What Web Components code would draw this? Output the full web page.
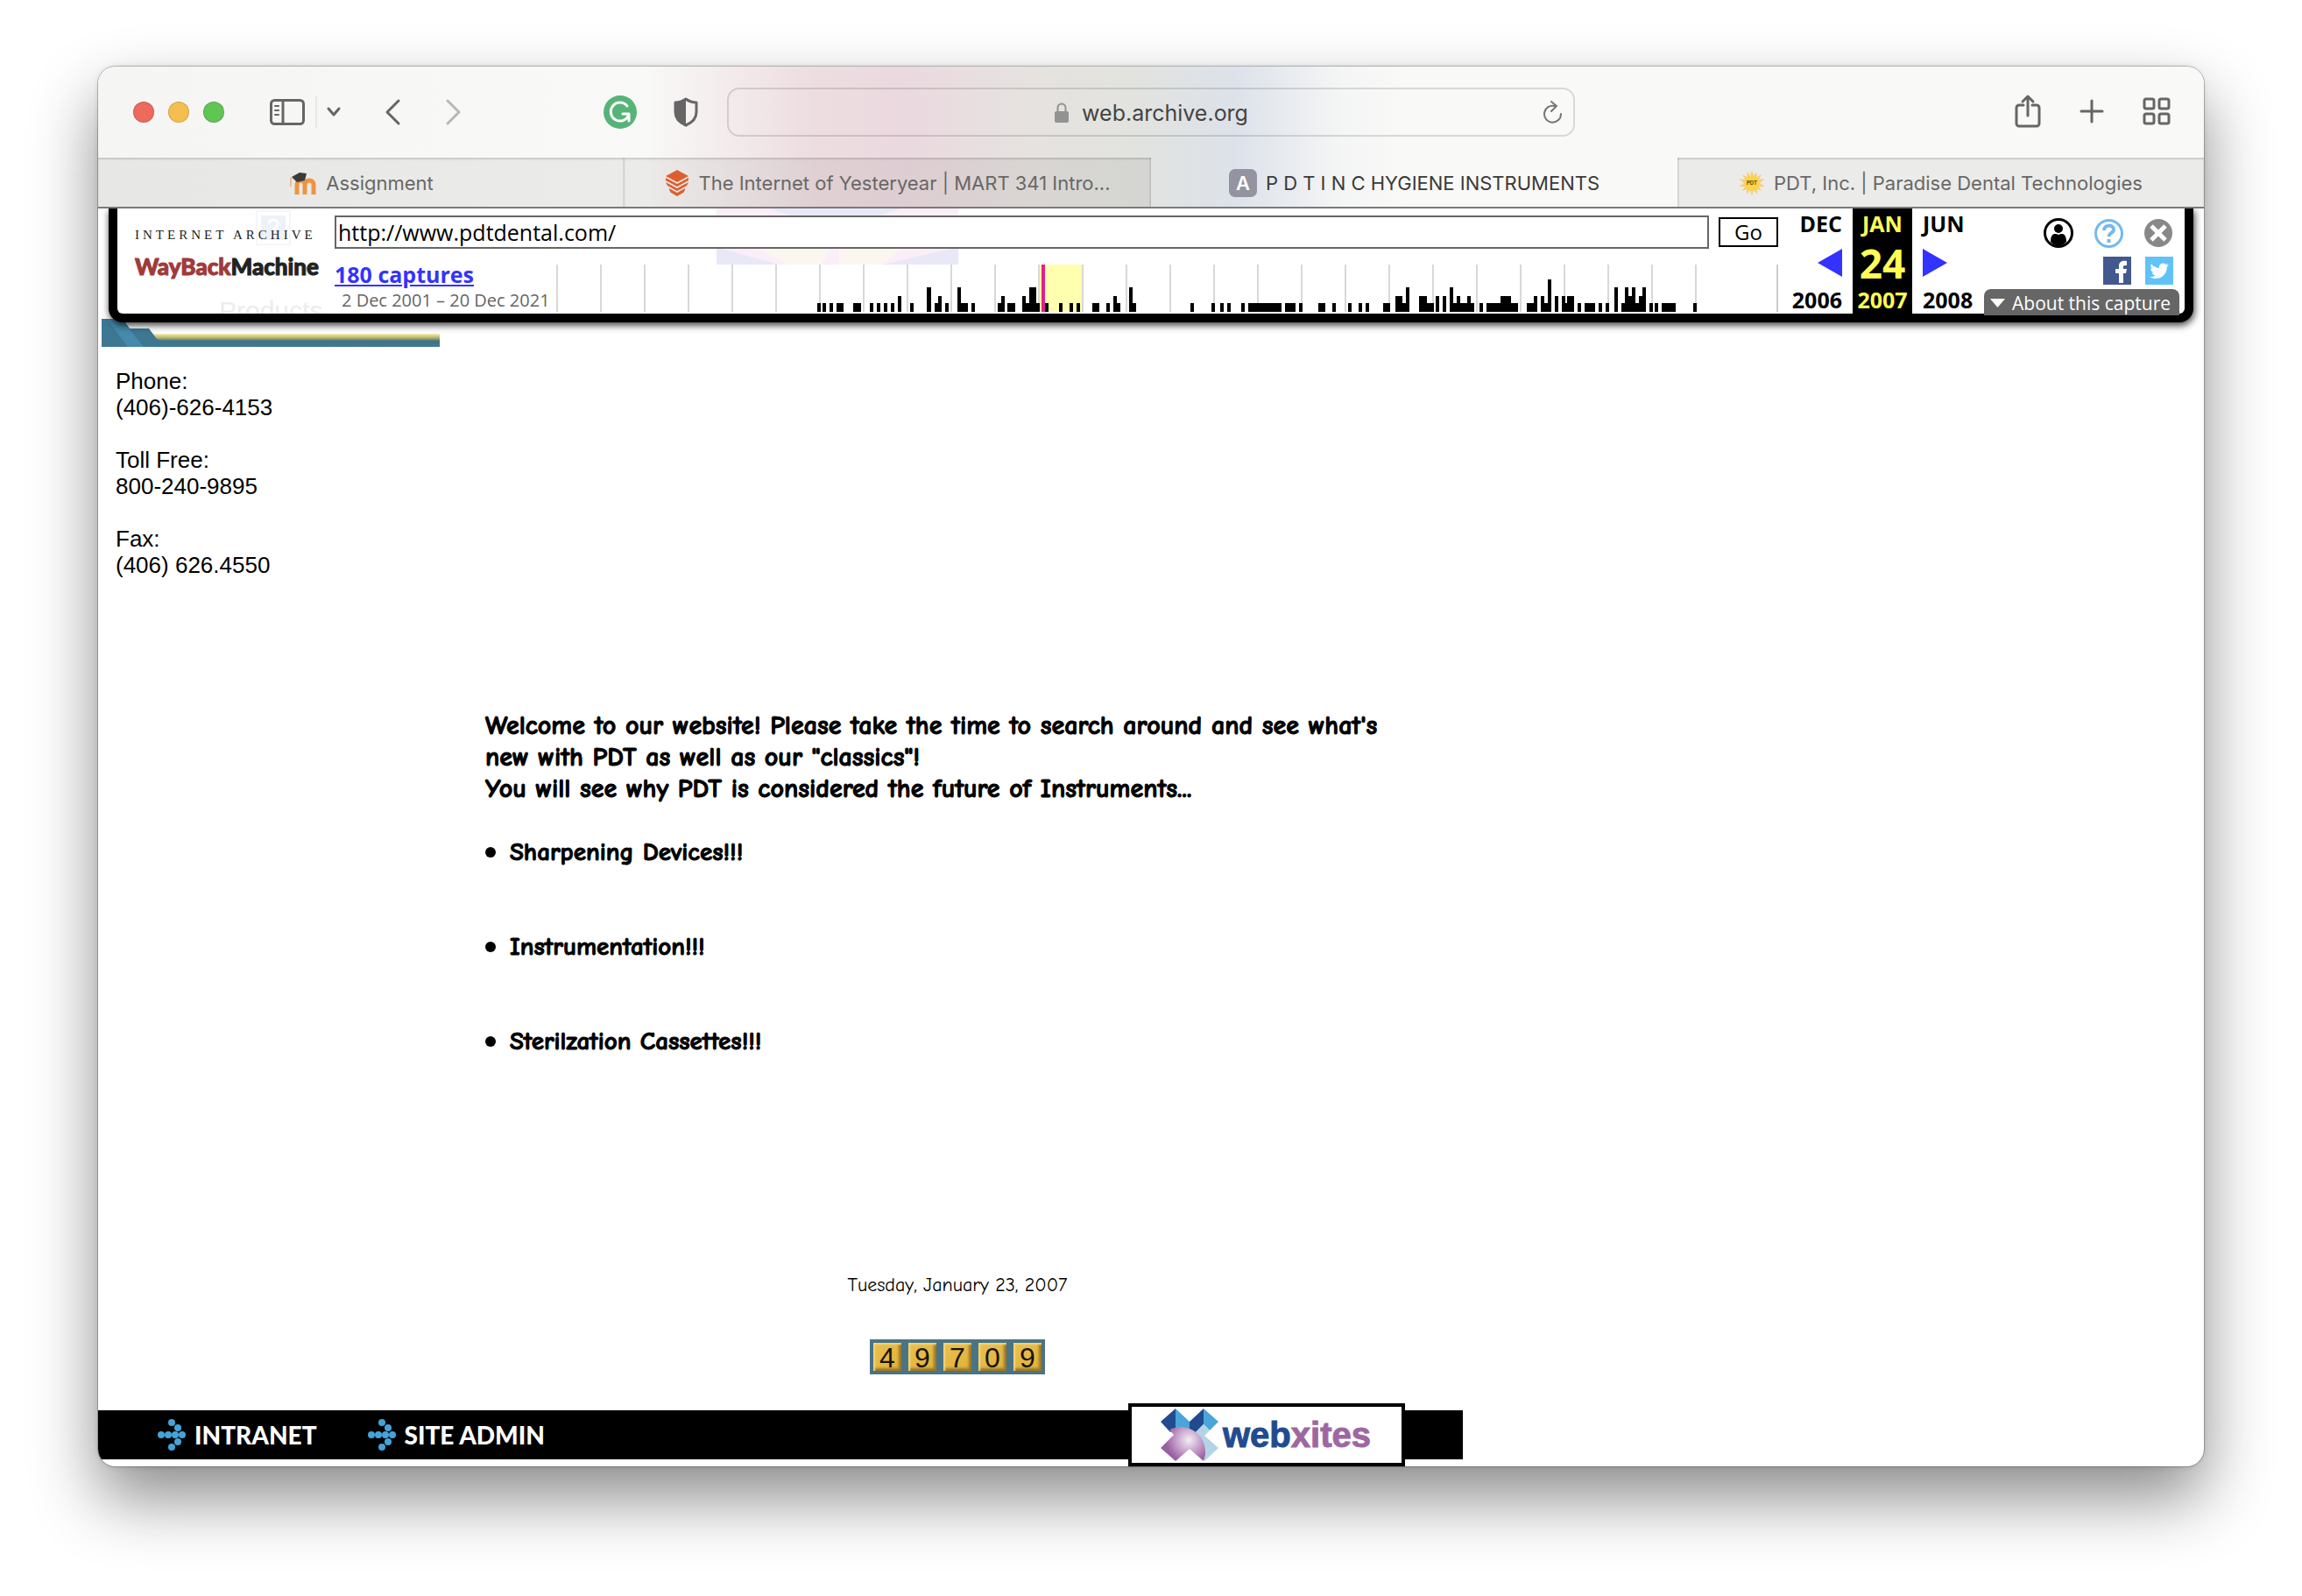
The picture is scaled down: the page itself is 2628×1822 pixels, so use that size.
<!DOCTYPE html>
<html lang="en">
<head>
<meta charset="utf-8">
<title>P D T I N C HYGIENE INSTRUMENTS</title>
<style>
  html { background: #fff; }
  body { margin: 0; min-height: 100vh; box-sizing: border-box; padding: 76px 112px 148px; display: flex; }
  browser-window { flex: 1; }
</style>
</head>
<body>
<browser-window>
  <browser-toolbar slot="toolbar"></browser-toolbar>
  <tab-strip slot="tabs">
    <browser-tab>
      <svg slot="icon" width="32" height="32" viewBox="0 0 32 32" aria-hidden="true"><path d="M9 29V18c0-3 2-5 4.500-5s4.500 2 4.500 5v11M18 18c0-3 2-5 5-5s5 2 5 5v11" fill="none" stroke="#ee9440" stroke-width="5"/><path d="M3 9l9-5 8 1-2 8-9 2z" fill="#3a3a3a"/><path d="M3 9c-2 4-1 8-1 11" stroke="#e8b9a0" stroke-width="2" fill="none"/></svg>
      Assignment
    </browser-tab>
    <browser-tab>
      <svg slot="icon" width="28" height="32" viewBox="0 0 28 32" aria-hidden="true"><g fill="#de5f2e"><path d="M14 1l13 7-13 7L1 8z"/><path d="M1 10l13 7 13-7v3l-13 7-13-7z"/><path d="M1 15l13 7 13-7-2 4-11 6-11-6z"/><path d="M5 22l9 5 9-5v2l-2 3-7 4-7-4-2-3z"/></g></svg>
      The Internet of Yesteryear | MART 341 Intro...
    </browser-tab>
    <browser-tab active>
      <svg slot="icon" width="32" height="32" viewBox="0 0 32 32" aria-hidden="true"><rect width="32" height="32" rx="7" fill="#9393a1"/><text x="16" y="24" text-anchor="middle" font-family="Inter, sans-serif" font-weight="600" font-size="22" fill="#fff">A</text></svg>
      P D T I N C HYGIENE INSTRUMENTS
    </browser-tab>
    <browser-tab>
      <svg slot="icon" width="30" height="30" viewBox="-15 -15 30 30" aria-hidden="true"><path fill="#f6cf7c" d="M0-15L2-8 5-13 6-7 11-10 8-4 15-5 9 0 15 4 8 4 11 9 6 7 6 13 2 8 0 15-2 8-6 13-6 7-11 9-8 4-15 4-9 0-15-5-8-4-11-10-6-7-5-13-2-8z"/><circle r="8" fill="#fbd63f"/><text y="2" text-anchor="middle" font-family="Inter, sans-serif" font-weight="700" font-size="6" fill="#5a4a10">PDT</text></svg>
      PDT, Inc. | Paradise Dental Technologies
    </browser-tab>
  </tab-strip>
  <wayback-bar></wayback-bar>
  <dental-page></dental-page>
</browser-window>

<script>
const define = (name, html, after) => {
  const template = document.createElement('template');
  template.innerHTML = html;
  customElements.define(name, class extends HTMLElement {
    constructor() {
      super();
      this.attachShadow({ mode: 'open' }).append(template.content.cloneNode(true));
      if (after) after(this.shadowRoot);
    }
  });
};

define('browser-window', `
<style>
  :host { display: flex; flex-direction: column; background: #fff; border-radius: 20px; overflow: hidden;
    box-shadow: 0 0 0 1px rgba(0,0,0,.22), 0 0 6px rgba(0,0,0,.12), 0 36px 76px rgba(0,0,0,.46); font-family: Inter, sans-serif; }
  header { border-bottom: 2px solid #7a7a7a;
    background: linear-gradient(90deg, #f5f5f4 0, #f9f9f7 26%, #eddde0 34%, #ebd9df 38%, #e6e2e0 44%, #e2e3df 49%, #dde2ea 54%, #f4f5f5 59%, #f9f9f7 62%); }
</style>
<header><slot name="toolbar"></slot><slot name="tabs"></slot></header>
<slot></slot>`);

define('browser-toolbar', `
<style>
  :host { display: grid; grid-template-columns: 718px minmax(200px, 968px) 1fr; align-items: center; height: 104px; color: #666; }
  .side { display: flex; align-items: center; }
  button { border: 0; padding: 0; margin: 0; background: none; color: inherit; display: flex; cursor: pointer; }
  svg { display: block; fill: none; stroke: currentColor; stroke-width: 3; stroke-linecap: round; stroke-linejoin: round; overflow: visible; }
  .lights { display: flex; gap: 16px; margin: 0 52px 0 40px; }
  .lights button { width: 24px; height: 24px; border-radius: 50%; box-sizing: border-box; border: 1px solid rgba(0,0,0,.14); }
  .split { width: 2px; height: 36px; background: #e8e8e7; margin: 0 12px; }
  .back { margin-left: 52px; } .fwd { margin-left: 54px; color: #b8b8b8; }
  .gram { margin-left: auto; } .shield { margin: 0 33px 0 42px; }
  .address { height: 56px; box-sizing: border-box; border: 2px solid rgba(0,0,0,.13); border-radius: 14px; display: grid;
    grid-template-columns: 34px 1fr 34px; align-items: center; }
  .url { grid-column: 2; display: flex; justify-content: center; align-items: center; gap: 14px; padding-top: 2px; }
  input { field-sizing: content; border: 0; padding: 0; background: none; font: 25px/32px Inter, sans-serif; color: #444; outline: 0; }
  .right { justify-content: flex-end; gap: 44px; padding: 0 38px 2px 0; }
</style>
<div class="side">
  <div class="lights"><button aria-label="Close window" style="background:#ed6a5e"></button><button aria-label="Minimise" style="background:#f5bf4f"></button><button aria-label="Zoom" style="background:#61c554"></button></div>
  <button aria-label="Sidebar"><svg width="40" height="30" viewBox="0 0 40 30"><rect x="1.500" y="1.500" width="37" height="27" rx="4"/><path d="M15 2v26"/><path d="M6 8h4M6 13h4M6 18h4" stroke-width="2"/></svg></button>
  <span class="split"></span>
  <button aria-label="Tab groups"><svg width="14" height="8" viewBox="0 0 14 8"><path d="M1 0l6 7 6-7"/></svg></button>
  <button class="back" aria-label="Back"><svg width="16" height="28" viewBox="0 0 16 28"><path d="M15 1L2 14l13 13"/></svg></button>
  <button class="fwd" aria-label="Forward"><svg width="16" height="28" viewBox="0 0 16 28"><path d="M1 1l13 13L1 27"/></svg></button>
  <button class="gram" aria-label="Grammarly"><svg width="38" height="38" viewBox="0 0 38 38"><circle cx="19" cy="19" r="19" fill="#56b476" stroke="none"/><path d="M27 12a10.500 10.500 0 1 0 2 9h-7M29 21v8" stroke="#fff" stroke-width="3"/></svg></button>
  <button class="shield" aria-label="Privacy report"><svg width="28" height="34" viewBox="0 0 28 34"><path d="M14 2c4 3 8 4 12 4v11c0 7-5 12-12 15C7 29 2 24 2 17V6c4 0 8-1 12-4z" stroke-width="3"/><path d="M14 2v30C7 29 2 24 2 17V6c4 0 8-1 12-4z" fill="currentColor" stroke="none"/></svg></button>
</div>
<div class="address">
  <label class="url"><svg width="18" height="24" viewBox="0 0 18 24" style="color:#939391"><rect x="1" y="10" width="16" height="13" rx="2" fill="currentColor" stroke="none"/><path d="M4.500 11V6a4.500 4.500 0 0 1 9 0v5" stroke-width="2"/></svg><input value="web.archive.org" aria-label="Address"></label>
  <button aria-label="Reload"><svg width="22" height="26" viewBox="0 0 22 26" style="color:#777"><path d="M13 6a9.500 9.500 0 1 0 7 9M9 1l6 5-6 6" stroke-width="2"/></svg></button>
</div>
<div class="side right">
  <button aria-label="Share"><svg width="30" height="38" viewBox="0 0 30 38"><path d="M10 12H5a3 3 0 0 0-3 3v18a3 3 0 0 0 3 3h20a3 3 0 0 0 3-3V15a3 3 0 0 0-3-3h-5M15 24V2M9 8l6-6 6 6"/></svg></button>
  <button aria-label="New tab"><svg width="28" height="28" viewBox="0 0 28 28"><path d="M14 2v24M2 14h24"/></svg></button>
  <button aria-label="Tab overview"><svg width="32" height="32" viewBox="0 0 32 32"><rect x="2" y="2" width="11" height="11" rx="2"/><rect x="19" y="2" width="11" height="11" rx="2"/><rect x="2" y="19" width="11" height="11" rx="2"/><rect x="19" y="19" width="11" height="11" rx="2"/></svg></button>
</div>`);

define('tab-strip', `
<style>:host { display: grid; grid-template-columns: repeat(4, 1fr); height: 56px; }</style><slot></slot>`);

define('browser-tab', `
<style>
  :host { display: flex; background: rgba(0,0,0,.055); box-shadow: inset 0 2px 2px rgba(0,0,0,.14), inset -2px 0 rgba(0,0,0,.07); color: #686866; }
  :host([active]) { background: none; box-shadow: none; color: #3a3a3a; }
  :host(:last-child) { box-shadow: inset 0 2px 2px rgba(0,0,0,.14), inset 2px 0 rgba(0,0,0,.07); }
  button { flex: 1; display: flex; align-items: center; justify-content: center; gap: 10px; border: 0; padding: 2px 0 0; background: none;
    font: 22px/28px Inter, sans-serif; color: inherit; white-space: nowrap; }
</style>
<button><slot name="icon"></slot><span><slot></slot></span></button>`);

define('capture-graph', `
<style>:host { display: block; } svg { display: block; }</style>
<svg width="1395" height="54" viewBox="635 302 1395 54" role="img" aria-label="Captures over time" shape-rendering="crispEdges"></svg>`,
root => {
  const bars = [[933],[939],[947],[955,8],[974,9],[993],[1001],[1009],[1017],[1025,4,2],[1039],[1058,5,3],[1067,8],[1071,4,2],[1079],
    [1093,12],[1093,4,3],[1109],[1139,8],[1143,4,2],[1150,9],[1167,20],[1167,4,2],[1175,8,3],[1193],[1209],[1221],[1229],[1247,8],[1263],
    [1271,8],[1271,4,2],[1289,8],[1289,4,3],[1359],[1383],[1393],[1401],[1417],[1425,38],[1467,12],[1483],[1505,8],[1521],[1539],[1551],
    [1559],[1579,8],[1593,16],[1593,8,2],[1605,4,3],[1620,17],[1620,9,2],[1639,4,2],[1647,4,2],[1655,28],[1655,4,3],[1663,4,2],[1675,4,2],
    [1689],[1697,36],[1713,12,2],[1743,12],[1751,4,2],[1759,12],[1759,4,2],[1767,4,4],[1775,4,2],[1783,14],[1783,4,2],[1789,8,2],[1801],
    [1809,12],[1825],[1833],[1843,4,3],[1851,28],[1855,4,3],[1859,4,2],[1863,4,3],[1871,4,2],[1875,4,3],[1883],[1889],[1897,16],[1933]];
  const tall = [0, 10, 18, 28, 37];
  let out = '<rect x="1187" y="302" width="48" height="54" fill="#ffffb0"/>';
  for (let x = 635; x < 1940; x += 50) out += `<rect x="${x}" y="302" width="2" height="54" fill="#d8d8d8"/>`;
  out += '<rect x="2028" y="302" width="2" height="54" fill="#ccc"/>';
  for (const [x, w = 4, h = 1] of bars) out += `<rect x="${x}" y="${356 - tall[h]}" width="${w}" height="${tall[h]}"/>`;
  out += '<rect x="1189" y="302" width="4" height="54" fill="#e0218a"/>';
  root.querySelector('svg').innerHTML = out;
});

define('wayback-bar', `
<style>
  :host { display: flex; height: 120px; margin: 0 12px; border: solid #000; border-width: 0 10px 10px; border-radius: 0 0 16px 16px;
    background: #fff; box-shadow: 1px 3px 8px rgba(0,0,0,.8); position: relative; z-index: 2;
    font: 25px/28px "Lucida Grande", "Open Sans", sans-serif; color: #000; clip-path: inset(0 -12px -20px -12px); }
  a { color: inherit; text-decoration: none; }
  .logo { width: 248px; flex: none; box-sizing: border-box; padding: 22px 0 0 20px; position: relative; }
  .ia, .wm { display: block; position: relative; white-space: nowrap; color: #222; }
  .ia { font: 15px/16px "Liberation Serif", serif; letter-spacing: 4px; }
  .wm { font: 900 26px/56px Lato, sans-serif; -webkit-text-stroke: 1px; }
  .wm b { color: #a03a3a; font-weight: inherit; }
  .ghost { position: absolute; left: 116px; bottom: 0; height: 20px; overflow: hidden; font: 30px/34px "Liberation Sans", sans-serif; color: #ececec; }
  .missing { position: absolute; left: 158px; top: 2px; }
  .mid { flex: 1; min-width: 0; position: relative; }
  form { display: flex; align-items: center; gap: 11px; padding-top: 8px; position: relative; }
  input { flex: 1; min-width: 0; box-sizing: border-box; height: 38px; border: 2px solid #666; padding: 0 2px; font: inherit; color: #000; background: #fff; }
  .go { width: 68px; height: 34px; border: 2px solid #000; background: #fff; font: inherit; font-size: 24px; line-height: 28px; padding: 0; }
  .row { display: flex; justify-content: space-between; position: relative; height: 54px; margin-top: 18px; }
  .caps a { display: block; font-weight: bold; color: #33f; text-decoration: underline; line-height: 26px; margin-top: -2px; }
  .caps span { display: block; font-size: 20px; line-height: 28px; color: #666; padding: 3px 0 0 8px; white-space: nowrap; }
  .photo { position: absolute; left: 436px; top: 0; }
  .cal { flex: none; display: grid; grid-template-columns: 85px 68px 82px; grid-template-rows: 34px 56px 30px; font-weight: bold; font-size: 25px; }
  .cal > * { display: grid; align-items: center; }
  .cal .p { justify-content: end; padding-right: 12px; } .cal .n { padding-left: 12px; }
  .cal .c { background: #000; color: #ff5; justify-content: center; }
  .cal .d { font-size: 46px; }
  .cal svg { display: block; fill: #33f; }
  .cal > :nth-child(n+7) { padding-bottom: 6px; }
  .end { flex: none; width: 229px; display: flex; flex-direction: column; align-items: flex-end; }
  .icons { display: flex; align-items: center; justify-content: flex-end; gap: 24px; padding: 11px 14px 0 0; }
  .social { gap: 16px; padding: 10px 13px 0 0; }
  .icons svg { display: block; }
  .icons a, .icons button { border: 0; padding: 0; background: none; display: block; }
  .about { margin: auto 6px -2px auto; width: 223px; height: 30px; border: 0; border-radius: 8px 8px 0 0; background: #666; color: #fff; padding: 2px 6px 0 7px;
    font: 500 21px/28px "Lucida Grande", "Open Sans", sans-serif; display: flex; align-items: center; gap: 8px; white-space: nowrap; }
</style>
<a class="logo" href="#">
  <svg class="missing" width="40" height="40" viewBox="0 0 40 40" aria-hidden="true"><rect x="1" y="1" width="38" height="38" fill="none" stroke="#f4f6fa" stroke-width="2"/><rect x="6" y="6" width="28" height="28" fill="#edf2f9"/><path d="M15 15c1-6 11-5 10 1 0 3-5 4-5 8M20 27v3" fill="none" stroke="#fff" stroke-width="3"/></svg>
  <span class="ia">INTERNET ARCHIVE</span>
  <span class="wm"><b>WayBack</b>Machine</span>
  <span class="ghost">Products</span>
</a>
<div class="mid">
  <svg class="photo" width="276" height="64" viewBox="0 0 276 64" aria-hidden="true"><rect width="276" height="64" fill="#faeef8"/><path d="M0 64V44l70 20zM60 0h150l-30 10H90zM190 64l86-20v20z" fill="#e8e8f6"/><path d="M50 46h80l-10 18H80zM140 46h70l-20 18h-50z" fill="#fbf7f0"/></svg>
  <form onsubmit="return false"><input value="http://www.pdtdental.com/" aria-label="URL"><button class="go">Go</button></form>
  <div class="row"><div class="caps"><a href="#">180 captures</a><span>2 Dec 2001 – 20 Dec 2021</span></div><capture-graph></capture-graph></div>
</div>
<div class="cal">
  <a href="#" class="p">DEC</a><span class="c">JAN</span><a href="#" class="n">JUN</a>
  <a href="#" class="p" aria-label="Previous capture"><svg width="28" height="32" viewBox="0 0 28 32"><path d="M28 0v32L0 16z"/></svg></a><span class="c d">24</span><a href="#" class="n" aria-label="Next capture"><svg width="28" height="32" viewBox="0 0 28 32"><path d="M0 0v32l28-16z"/></svg></a>
  <a href="#" class="p">2006</a><span class="c">2007</span><a href="#" class="n">2008</a>
</div>
<div class="end">
  <div class="icons">
    <a href="#" aria-label="Sign in"><svg width="34" height="34" viewBox="0 0 34 34"><circle cx="17" cy="17" r="15.500" fill="#fff" stroke="#000" stroke-width="3"/><circle cx="17" cy="12" r="5"/><path d="M8 27c0-10 5-10 9-8 4-2 9-2 9 8-5 6-13 6-18 0z"/></svg></a>
    <a href="#" aria-label="Help"><svg width="33" height="33" viewBox="0 0 33 33"><circle cx="16.500" cy="16.500" r="15" fill="none" stroke="#74b9f0" stroke-width="3"/><path d="M11 13c0-7 11-7 11-1 0 4-5.500 4-5.500 8M16.500 23v4" fill="none" stroke="#74b9f0" stroke-width="4"/></svg></a>
    <button aria-label="Close toolbar"><svg width="32" height="32" viewBox="0 0 32 32"><circle cx="16" cy="16" r="16" fill="#888"/><path d="M8 8l16 16M24 8L8 24" stroke="#fff" stroke-width="5"/></svg></button>
  </div>
  <div class="icons social">
    <a href="#" aria-label="Share on Facebook"><svg width="32" height="32" viewBox="0 0 32 32"><rect width="32" height="32" fill="#43588f"/><path d="M18 30V19h-4v-5h4v-3c0-5 3-7 9-6v5c-3 0-4 0-4 2v2h4l-1 5h-3v11z" fill="#fff"/></svg></a>
    <a href="#" aria-label="Share on Twitter"><svg width="32" height="32" viewBox="0 0 32 32"><rect width="32" height="32" fill="#5fc3f7"/><path d="M27 9.500c-.8.400-1.700.600-2.500.700.900-.600 1.600-1.400 1.900-2.400-.9.500-1.800.9-2.800 1.100a4.500 4.500 0 0 0-7.600 4.100c-3.700-.2-7-2-9.200-4.700-1.200 2-.6 4.600 1.400 5.900-.7 0-1.400-.2-2-.500 0 2.100 1.500 4 3.500 4.400-.6.200-1.300.200-2 .1.600 1.700 2.200 3 4.100 3.100A9 9 0 0 1 5 23.100c8.500 5.300 20-.3 19.800-11.300.9-.6 1.600-1.400 2.200-2.300z" fill="#fff"/></svg></a>
  </div>
  <button class="about"><svg width="17" height="10" viewBox="0 0 17 10"><path d="M0 0h17L8.500 10z" fill="#fff"/></svg>About this capture</button>
</div>`);

define('hit-counter', `
<style>
  :host { display: inline-flex; background: #4a7484; padding: 4px; gap: 8px; }
  span { width: 32px; height: 32px; font: 32px/34px "Liberation Sans", Arial, sans-serif; text-align: center; color: #17140a;
    background: linear-gradient(135deg, #e9c04e, #e2b13a); box-shadow: inset 2px 2px 2px #f3d67e, inset -3px -3px 3px #9a7526; }
</style>`,
root => { for (const d of '49709') { const s = document.createElement('span'); s.textContent = d; root.append(s); } });

define('arrow-link', `
<style>
  :host { display: block; }
  a { display: flex; align-items: center; gap: 10px; color: #fff; text-decoration: none; font: 900 28px/36px Lato, sans-serif; }
</style>
<a href="#"><svg width="32" height="36" viewBox="0 0 32 36" fill="#45a3d9" aria-hidden="true"><circle cx="16" cy="4" r="4"/><circle cx="23" cy="10" r="4"/><circle cx="4" cy="18" r="4"/><circle cx="12" cy="18" r="4"/><circle cx="20" cy="18" r="4"/><circle cx="28" cy="18" r="4"/><circle cx="23" cy="26" r="4"/><circle cx="16" cy="32" r="4"/></svg><span><slot></slot></span></a>`);

define('dental-page', `
<style>
  :host { display: flex; flex-direction: column; flex: 1; max-width: 1558px; color: #000; }
  .accent { display: block; margin: -4px 0 0 4px; }
  .cols { display: grid; grid-template-columns: 404px 1fr; flex: 1; }
  address { font: 26px/30px Arial, "Liberation Sans", sans-serif; padding: 24px 0 0 20px; }
  address p { margin: 0 0 30px; }
  main { display: flex; flex-direction: column; font: bold 30px/36px "Comic Sans MS", "Comic Neue", "Open Sans", sans-serif; padding: 415px 38px 0; }
  main p { margin: 0; }
  .intro, ul { -webkit-text-stroke: 1px; }
  ul { margin: 36px 0 0; padding: 0; list-style: none; display: grid; gap: 72px; font-size: 29px; }
  li { display: flex; align-items: center; gap: 16px; }
  li::before { content: ""; width: 12px; height: 12px; border-radius: 50%; background: #000; }
  .date { font-weight: normal; font-size: 22px; line-height: 28px; text-align: center; margin: 246px 0 48px; }
  hit-counter { align-self: center; }
  footer { display: flex; justify-content: space-between; align-items: center; background: linear-gradient(#000, #000) 0 8px / 100% 56px no-repeat; height: 72px; margin-top: 32px; padding: 0 66px 0 68px; }
  nav { display: flex; gap: 58px; }
  .brand { display: flex; align-items: center; gap: 5px; box-sizing: border-box; width: 316px; height: 72px; border: 4px solid #000; background: #fff; padding-left: 33px; text-decoration: none;
    font: bold 40px/60px Arial, "Liberation Sans", sans-serif; color: #224b8f; -webkit-text-stroke: 1px; }
  .brand b { color: #9d67a2; }
</style>
<svg class="accent" width="388" height="32" viewBox="0 0 388 32" aria-hidden="true">
  <defs><linearGradient id="g" x1="0" y1="0" x2="0" y2="1"><stop offset="0" stop-color="#f8eeb0"/><stop offset=".3" stop-color="#b9b56a"/><stop offset=".55" stop-color="#3f7385"/><stop offset="1" stop-color="#3f7a95"/></linearGradient></defs>
  <rect x="50" y="17" width="336" height="15" fill="url(#g)"/><path d="M0 0h24l8 11h22l9 12 20 9H0z" fill="#3d7792"/><path d="M6 0h16l26 32H30z" fill="#4589ab"/></svg>
<div class="cols">
  <address><p>Phone:<br>(406)-626-4153</p><p>Toll Free:<br>800-240-9895</p><p>Fax:<br>(406) 626.4550</p></address>
  <main>
    <p class="intro">Welcome to our website! Please take the time to search around and see what's<br>new with PDT as well as our "classics"!</p>
    <p class="intro">You will see why PDT is considered the future of Instruments...</p>
    <ul><li>Sharpening Devices!!!</li><li>Instrumentation!!!</li><li>Sterilzation Cassettes!!!</li></ul>
    <p class="date">Tuesday, January 23, 2007</p>
    <hit-counter></hit-counter>
  </main>
</div>
<footer>
  <nav><arrow-link>INTRANET</arrow-link><arrow-link>SITE ADMIN</arrow-link></nav>
  <a class="brand" href="#"><svg width="66" height="60" viewBox="0 0 66 60" aria-hidden="true">
    <defs><radialGradient id="s" cx="32" cy="36" r="26" gradientUnits="userSpaceOnUse"><stop offset="0" stop-color="#f4eef5"/><stop offset=".5" stop-color="#c9a5cd"/><stop offset="1" stop-color="#9a5f9f"/></radialGradient></defs>
    <path d="M0 15L17 0v22L11 27z" fill="#224b8f"/><path d="M17 0l16 15v12H17z" fill="#4aa5d8"/><path d="M33 15L49 0v18L39 28H33z" fill="#224b8f"/><path d="M49 0l17 15-10 10-7-7z" fill="#4aa5d8"/>
    <path d="M49 18l7 7-6 6 16 14-16 15-12-20 2-13z" fill="#b4d3e6"/><path d="M10 24c18-8 42 2 41 28l-2 8-16-14-16 14L0 45l15-15z" fill="url(#s)"/></svg><span>web<b>xites</b></span></a>
</footer>`);
</script>
</body>
</html>
